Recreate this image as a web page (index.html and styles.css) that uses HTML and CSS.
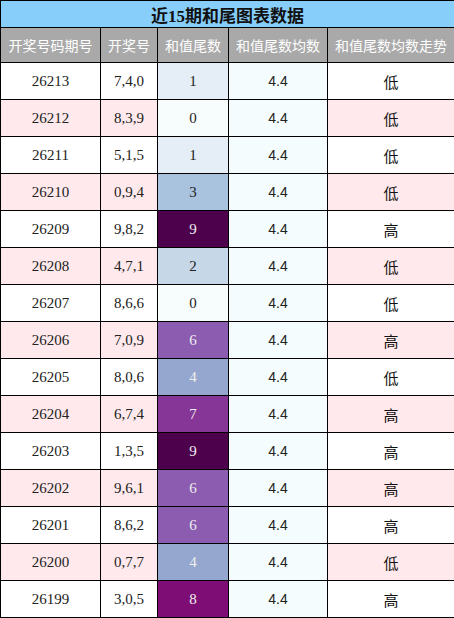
FILE: index.html
```html
<!DOCTYPE html>
<html lang="zh-CN">
  <head>
    <meta charset="UTF-8" />
    <meta name="viewport" content="width=device-width, initial-scale=1.0" />
    <title>近15期和尾图表数据</title>
    <link rel="stylesheet" href="styles.css">
  </head>
  <body>
    <table class="chart">
      <colgroup>
        <col class="c-issue" />
        <col class="c-nums" />
        <col class="c-tail" />
        <col class="c-avg" />
        <col class="c-trend" />
      </colgroup>
      <thead>
        <tr class="title"><th colspan="5">近15期和尾图表数据</th></tr>
        <tr class="head">
          <th>开奖号码期号</th>
          <th>开奖号</th>
          <th>和值尾数</th>
          <th>和值尾数均数</th>
          <th>和值尾数均数走势</th>
        </tr>
      </thead>
      <tbody>
        <tr><td>26213</td><td>7,4,0</td><td class="tail t1">1</td><td class="avg">4.4</td><td class="trend">低</td></tr>
        <tr class="odd"><td>26212</td><td>8,3,9</td><td class="tail t0">0</td><td class="avg">4.4</td><td class="trend">低</td></tr>
        <tr><td>26211</td><td>5,1,5</td><td class="tail t1">1</td><td class="avg">4.4</td><td class="trend">低</td></tr>
        <tr class="odd"><td>26210</td><td>0,9,4</td><td class="tail t3">3</td><td class="avg">4.4</td><td class="trend">低</td></tr>
        <tr><td>26209</td><td>9,8,2</td><td class="tail t9">9</td><td class="avg">4.4</td><td class="trend">高</td></tr>
        <tr class="odd"><td>26208</td><td>4,7,1</td><td class="tail t2">2</td><td class="avg">4.4</td><td class="trend">低</td></tr>
        <tr><td>26207</td><td>8,6,6</td><td class="tail t0">0</td><td class="avg">4.4</td><td class="trend">低</td></tr>
        <tr class="odd"><td>26206</td><td>7,0,9</td><td class="tail t6">6</td><td class="avg">4.4</td><td class="trend">高</td></tr>
        <tr><td>26205</td><td>8,0,6</td><td class="tail t4">4</td><td class="avg">4.4</td><td class="trend">低</td></tr>
        <tr class="odd"><td>26204</td><td>6,7,4</td><td class="tail t7">7</td><td class="avg">4.4</td><td class="trend">高</td></tr>
        <tr><td>26203</td><td>1,3,5</td><td class="tail t9">9</td><td class="avg">4.4</td><td class="trend">高</td></tr>
        <tr class="odd"><td>26202</td><td>9,6,1</td><td class="tail t6">6</td><td class="avg">4.4</td><td class="trend">高</td></tr>
        <tr><td>26201</td><td>8,6,2</td><td class="tail t6">6</td><td class="avg">4.4</td><td class="trend">高</td></tr>
        <tr class="odd"><td>26200</td><td>0,7,7</td><td class="tail t4">4</td><td class="avg">4.4</td><td class="trend">低</td></tr>
        <tr><td>26199</td><td>3,0,5</td><td class="tail t8">8</td><td class="avg">4.4</td><td class="trend">高</td></tr>
      </tbody>
    </table>
  </body>
</html>
```

FILE: styles.css
```css
body {
  margin: 0;
  background-color: #fff;
  font-family: "Liberation Serif", "Noto Sans CJK SC", serif;
  color: #222;
}
.chart {
  width: 454px;
  border-collapse: collapse;
  table-layout: fixed;
}
.c-issue { width: 100px; }
.c-nums { width: 57px; }
.c-tail { width: 71px; }
.c-avg { width: 99px; }
.c-trend { width: 127px; }

.chart th,
.chart td {
  border: 1px solid #000;
  padding: 0;
  text-align: center;
}
.title th {
  height: 26px;
  background-color: #87cefa;
  color: #111;
  font-size: 17px;
  font-weight: bold;
}
.head th {
  height: 34px;
  background-color: #a9a9a9;
  color: #fff;
  font-family: "Noto Sans CJK SC", sans-serif;
  font-size: 14px;
  font-weight: normal;
}
.chart td {
  height: 36px;
  font-size: 15px;
}
tr.odd td {
  background-color: #ffe9ec;
}
.chart td.avg {
  background-color: #f5fcfd;
  font-family: "Liberation Sans", sans-serif;
  font-size: 14px;
}
.chart td.trend {
  font-family: "Noto Sans CJK SC", sans-serif;
  font-size: 15px;
  color: #111;
}

/* heat colours for the tail digit */
.chart td.t0 { background-color: #f7fcfd; }
.chart td.t1 { background-color: #e5eef6; }
.chart td.t2 { background-color: #c6d7e8; }
.chart td.t3 { background-color: #a9c3de; }
.chart td.t4 { background-color: #95a7cf; color: #eee; }
.chart td.t6 { background-color: #8b5cb0; color: #eee; }
.chart td.t7 { background-color: #853696; color: #eee; }
.chart td.t8 { background-color: #7e0e76; color: #eee; }
.chart td.t9 { background-color: #4d004b; color: #eee; }
```
